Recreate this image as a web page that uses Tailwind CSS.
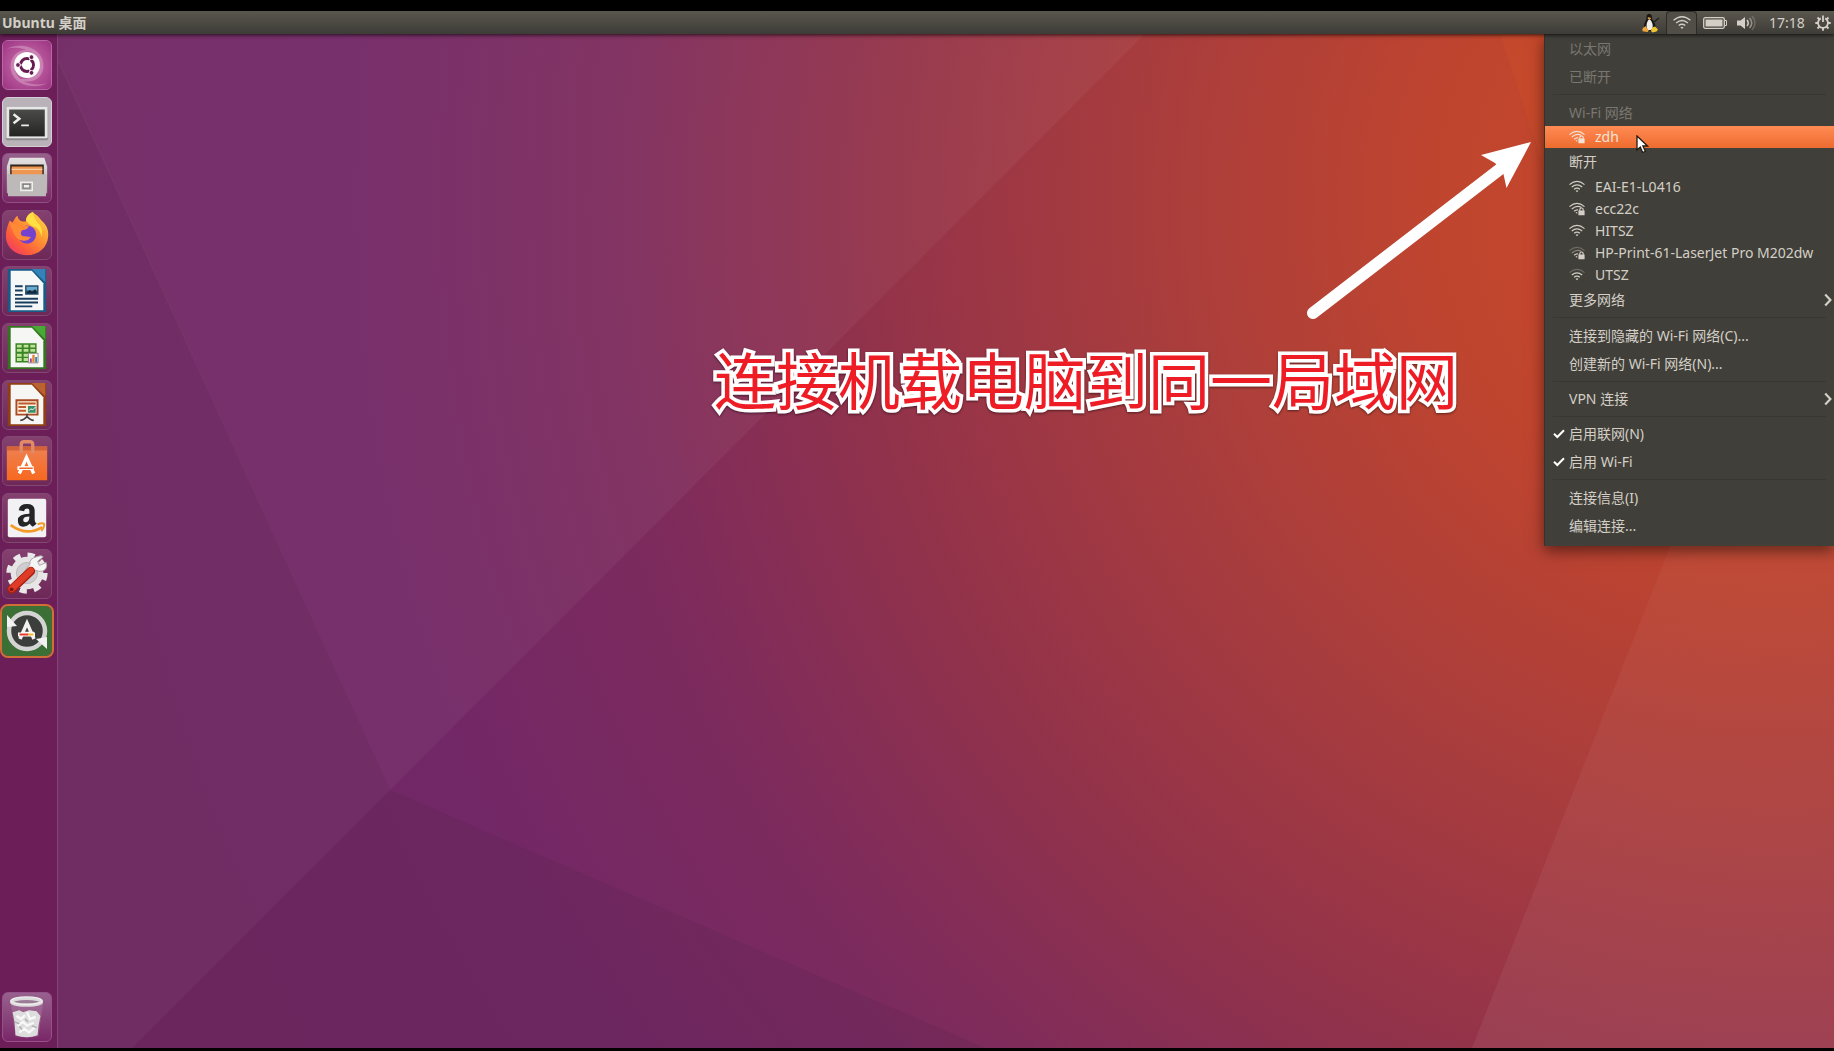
<!DOCTYPE html>
<html lang="zh-CN">
<head>
<meta charset="utf-8">
<title>Ubuntu 桌面</title>
<script src="https://cdn.jsdelivr.net/npm/@tailwindcss/browser@4"></script>
</head>
<body class="flex h-screen flex-col overflow-hidden bg-black pt-[11px] pb-[3px] font-['Noto_Sans','Noto_Sans_CJK_SC',sans-serif] text-sm text-[#d3cfc7]">

<!-- Shared symbols and gradients -->
<svg class="absolute size-0" aria-hidden="true">
  <defs>
    <symbol id="wifi" viewBox="0 0 16 14">
      <g fill="none" stroke="currentColor" stroke-width="1.200">
        <path d="M0.5 4.600Q8-1.800 15.500 4.600"/>
        <path d="M2.800 7Q8 2.600 13.200 7"/>
        <path d="M5.100 9.300Q8 7 10.900 9.300"/>
      </g>
      <path d="M6.600 10.800Q8 9.800 9.400 10.800L8 12.300z" fill="currentColor"/>
    </symbol>
    <symbol id="wifi-low" viewBox="0 0 16 14">
      <g fill="none" stroke="currentColor" stroke-width="1.200">
        <path d="M0.5 4.600Q8-1.800 15.500 4.600" opacity=".3"/>
        <path d="M2.800 7Q8 2.600 13.200 7"/>
        <path d="M5.100 9.300Q8 7 10.900 9.300"/>
      </g>
      <path d="M6.600 10.800Q8 9.800 9.400 10.800L8 12.300z" fill="currentColor"/>
    </symbol>
    <symbol id="wifi-lock" viewBox="0 0 16 14">
      <g fill="none" stroke="currentColor" stroke-width="1.200">
        <path d="M0.5 4.600Q8-1.800 15.500 4.600"/>
        <path d="M2.800 7Q8 2.600 12.500 5.600"/>
        <path d="M5.100 9.300Q7 7.600 9 7.900"/>
      </g>
      <path d="M6.400 10.800L8.200 9.800v2z" fill="currentColor"/>
      <path d="M9.400 8.500h.8V7.700a2.300 2.300 0 0 1 4.600 0v.8h.8V13.200h-6.200zM11.400 8.500h2.200V7.700a1.100 1.100 0 0 0-2.200 0z" fill="currentColor" fill-rule="evenodd"/>
    </symbol>
    <symbol id="wifi-lock-low" viewBox="0 0 16 14">
      <g fill="none" stroke="currentColor" stroke-width="1.200">
        <path d="M0.5 4.600Q8-1.800 15.500 4.600" opacity=".3"/>
        <path d="M2.800 7Q8 2.600 12.500 5.600" opacity=".5"/>
        <path d="M5.100 9.300Q7 7.600 9 7.900"/>
      </g>
      <path d="M6.400 10.800L8.200 9.800v2z" fill="currentColor"/>
      <path d="M9.400 8.500h.8V7.700a2.300 2.300 0 0 1 4.600 0v.8h.8V13.200h-6.200zM11.400 8.500h2.200V7.700a1.100 1.100 0 0 0-2.200 0z" fill="currentColor" fill-rule="evenodd"/>
    </symbol>
    <symbol id="chevron" viewBox="0 0 8 14"><path d="M1.2 1.500L6.400 7L1.200 12.500" fill="none" stroke="currentColor" stroke-width="2.200"/></symbol>
    <symbol id="check" viewBox="0 0 12 10"><path d="M1 4.800L4.300 8L11 1.200" fill="none" stroke="currentColor" stroke-width="2"/></symbol>
    <linearGradient id="metal" x1="0" y1="0" x2="0" y2="1"><stop offset="0" stop-color="#e4e2e2"/><stop offset="1" stop-color="#aaa7a9"/></linearGradient>
    <linearGradient id="screen" x1="0" y1="0" x2="0" y2="1"><stop offset="0" stop-color="#4b4b49"/><stop offset="1" stop-color="#242423"/></linearGradient>
    <linearGradient id="fox" x1="1" y1="0" x2="0.1" y2="1"><stop offset="0" stop-color="#ffe44a"/><stop offset=".4" stop-color="#ff9a32"/><stop offset=".75" stop-color="#fb5a3d"/><stop offset="1" stop-color="#ee3572"/></linearGradient>
    <linearGradient id="bag" x1="0" y1="0" x2="0" y2="1"><stop offset="0" stop-color="#ee8153"/><stop offset="1" stop-color="#f7691f"/></linearGradient>
    <radialGradient id="swirl" cx=".5" cy=".5" r=".7"><stop offset="0" stop-color="#cf76ad"/><stop offset="1" stop-color="#9c3384"/></radialGradient>
  </defs>
</svg>

<header class="relative z-20 flex h-[23px] shrink-0 items-center bg-gradient-to-b from-[#5a574e] to-[#3e3c37] pl-[2px] shadow-[0_1px_4px_rgba(0,0,0,0.75)]">
  <h1 class="flex-1 text-sm leading-5 font-bold">Ubuntu 桌面</h1>
  <div class="flex h-full items-center">
    <button aria-label="输入法" class="mr-1 flex w-[22px] justify-center">
      <svg class="h-5 w-5" viewBox="0 0 20 20">
        <path d="M8 1C5.500 1 5.400 3.500 5.600 5.500C4.500 8 2.600 11 3 14.500L6 18h5l3.500-4C14.500 10 12 8 11 5.500C11.200 3 10.500 1 8 1z" fill="#191816"/>
        <path d="M7.800 6.500C5.500 9 4.500 14 7 17h3.200C13 14 11.500 9 9 6.500z" fill="#efeeea"/>
        <path d="M7 4.300l2 .2 1.300.9-2 1.200-1.700-1z" fill="#e9a13b"/>
        <path d="M1.500 15.500L4.500 13l3.300 4.500-1.300 1.500-5-.8z" fill="#f0a73c"/>
        <path d="M10 18l1-3.500 3-1 3 3-1.500 2-4 1z" fill="#f1c431"/>
        <path d="M13 9l5-4" stroke="#23211d" stroke-width="1.600"/>
      </svg>
    </button>
    <button aria-label="网络" class="flex h-[23px] w-[31px] items-center justify-center rounded-t-sm border border-b-0 border-[#2d2b27] bg-[#504e47]">
      <svg class="h-4 w-[18px]"><use href="#wifi"/></svg>
    </button>
    <button aria-label="电池" class="ml-1.5 flex w-6">
      <svg class="h-3 w-6" viewBox="0 0 24 12"><rect x=".7" y=".7" width="20.600" height="10.600" rx="1.500" fill="none" stroke="currentColor" stroke-width="1.300"/><path d="M2.500 2.500h17v7h-17z" fill="currentColor"/><path d="M22 3.500h1.500v5H22" fill="none" stroke="currentColor"/></svg>
    </button>
    <button aria-label="音量" class="ml-2.5 flex w-5">
      <svg class="h-4 w-5" viewBox="0 0 20 16"><path d="M0 5.500h3.500L8 2v12l-4.500-3.500H0z" fill="currentColor"/><g fill="none" stroke="currentColor" stroke-width="1.500"><path d="M10 5q2.500 3 0 6"/><path d="M12.500 3q4.500 5 0 10" opacity=".55"/><path d="M15 1q6 7 0 14" opacity=".25"/></g></svg>
    </button>
    <time class="ml-3 w-9 text-sm leading-5">17:18</time>
    <button aria-label="系统" class="mr-[3px] ml-2.5 flex w-4">
      <svg class="size-4" viewBox="0 0 16 16" fill="none" stroke="currentColor"><path d="M5.800 3.400A5 5 0 1 0 10.200 3.400" stroke-width="1.800"/><path d="M8 .5v6.500" stroke-width="1.800"/><path d="M.3 8h2.700M13 8h2.700M2.500 2.500l2 2M13.500 2.500l-2 2M2.500 13.500l2-2M13.500 13.500l-2-2M8 13v2.700" stroke-width="1.900"/></svg>
    </button>
  </div>
</header>

<main class="relative isolate flex min-h-0 flex-1">
  <!-- Wallpaper -->
  <svg class="absolute inset-0 -z-10 size-full" viewBox="0 34 1834 1014" preserveAspectRatio="none" aria-hidden="true">
    <defs>
      <radialGradient id="glow" gradientUnits="userSpaceOnUse" cx="1780" cy="200" r="1750">
        <stop offset="0" stop-color="#c84a29"/><stop offset=".19" stop-color="#c0452e"/><stop offset=".36" stop-color="#a93d3d"/>
        <stop offset=".51" stop-color="#943349"/><stop offset=".67" stop-color="#7d2b5d"/><stop offset=".82" stop-color="#722766"/><stop offset="1" stop-color="#702763"/>
      </radialGradient>
      <linearGradient id="edge" gradientUnits="userSpaceOnUse" x1="0" y1="500" x2="0" y2="1048"><stop offset="0" stop-color="#fff" stop-opacity=".03"/><stop offset="1" stop-color="#fff" stop-opacity=".06"/></linearGradient>
    </defs>
    <path d="M0 34h1834v1014H0z" fill="url(#glow)"/>
    <path d="M57 34H1145L390 790L57 60z" fill="#fff" opacity=".045"/>
    <path d="M57 55L390 790L132 1048H57z" fill="#7c6a6a" opacity=".09"/>
    <path d="M390 790L985 1048H132z" fill="#5a264f" opacity=".24"/>
    <path d="M1500 34h334v514H1670z" fill="#ea6a1d" opacity=".1"/>
    <path d="M1834 170L1670 547L1472 1048h362z" fill="url(#edge)"/>
  </svg>

  <nav aria-label="启动器" class="flex w-[58px] shrink-0 flex-col justify-between border-r border-[#854378] bg-[#6b1e58] py-1.5 pl-[2px]">
    <div class="flex h-[616px] flex-col justify-between">
      <button aria-label="搜索" class="size-[50px] overflow-hidden rounded-md border border-[#b868a5] bg-[#a4408b]">
        <svg class="size-full" viewBox="0 0 50 50"><path d="M0 0h50v50H0z" fill="url(#swirl)"/><path d="M4 8C20 0 44 8 42 28C40 44 20 46 10 36C16 42 34 42 37 26C38 12 20 4 4 8zM46 44C30 52 6 44 8 24C10 10 24 6 34 12C22 8 12 14 12 26C12 42 30 48 46 44z" fill="#fff" opacity=".25"/><circle cx="25" cy="25" r="13.500" fill="#fff"/><circle cx="25" cy="25" r="6.800" fill="none" stroke="#681d52" stroke-width="3"/><path d="M25 25H13M25 25l6-10.400M25 25l6 10.400" stroke="#fff" stroke-width="1.200"/><g fill="#681d52" stroke="#fff"><circle cx="15.600" cy="25" r="2.500"/><circle cx="29.700" cy="16.800" r="2.500"/><circle cx="29.700" cy="33.200" r="2.500"/></g></svg>
      </button>
      <button aria-label="终端" class="size-[50px] overflow-hidden rounded-md border border-[#d4cfd3] bg-[#b9b2b9]">
        <svg class="size-full" viewBox="0 0 50 50"><rect x="3" y="9" width="44" height="35" rx="1.500" fill="#8c8a8b"/><rect x="3.500" y="9" width="43" height="33" rx="1" fill="#e8e7e7"/><rect x="6.500" y="12" width="37" height="28" fill="url(#screen)"/><path d="M11 17l6 4.700-6 4.700" fill="none" stroke="#eee" stroke-width="2.600"/><path d="M19 28.500h8" stroke="#eee" stroke-width="2"/></svg>
      </button>
      <button aria-label="文件" class="size-[50px] overflow-hidden rounded-md border border-[#8f5183] bg-gradient-to-b from-[#95608a] to-[#792864]">
        <svg class="size-full" viewBox="0 0 50 50"><path d="M7 4h36l3 9v28H4V13z" fill="url(#metal)"/><path d="M7.500 11h35v11h-35z" fill="#30241c"/><path d="M9 13h32v9H9z" fill="#ee9552"/><path d="M9 16h32" stroke="#f4d0a6" stroke-width="1.500"/><path d="M4.500 21h41l-.8 23h-39.400z" fill="#bdb9b9"/><rect x="18.500" y="29.500" width="12" height="8.500" fill="#b2adad" stroke="#f0eeee" stroke-width="1.500"/><rect x="21" y="31.500" width="7" height="4" fill="#eee" stroke="#706c6c"/></svg>
      </button>
      <button aria-label="Firefox" class="size-[50px] overflow-hidden rounded-md border border-[#824873] bg-gradient-to-b from-[#84406f] to-[#6d2858]">
        <svg class="size-full" viewBox="0 0 50 50"><path d="M31 1C34 4 37 5 40 10C45 14 48 20 47 27C46 38 37 46 25 46C12 46 3 37 3 26C3 20 5 15 7 10L10 12Q13 6 15 5Q16 10 20 11L24 11Q23 5 31 1z" fill="url(#fox)"/><circle cx="25" cy="24.500" r="9.500" fill="#7542cf"/><path d="M7 12L15 14L27 16Q25 20 20 20Q17 23 20 26L29 27Q25 33 17 30C12 27 10 21 7 12z" fill="#ff8a36"/><path d="M24 10Q24 4 31 1Q32 8 38 14Q42 19 40 27Q39 20 34 17Q28 16 24 10z" fill="#ffdf42"/></svg>
      </button>
      <button aria-label="Writer" class="size-[50px] overflow-hidden rounded-md border border-[#824873] bg-gradient-to-b from-[#84406f] to-[#6d2858]">
        <svg class="size-full" viewBox="0 0 50 50"><path d="M5 2h40v45H5z" fill="#175b86"/><path d="M8 4h22l12 13v28H8z" fill="#f6f7f7"/><path d="M30 2h14v14z" fill="#3483b8"/><path d="M12.500 20h8M12.500 24.500h8M12.500 29h8M12.500 33h24M12.500 37h24M12.500 41h18" stroke="#183f5f" stroke-width="2"/><path d="M23 19h14v10H23z" fill="#264e6b"/><path d="M24.500 20.500h11v4h-11z" fill="#68abcf"/><path d="M24.500 27l3-3 3 2 3-3 2 4.500h-11z" fill="#13293b"/></svg>
      </button>
      <button aria-label="Calc" class="size-[50px] overflow-hidden rounded-md border border-[#824873] bg-gradient-to-b from-[#84406f] to-[#6d2858]">
        <svg class="size-full" viewBox="0 0 50 50"><path d="M5 2h40v45H5z" fill="#33751f"/><path d="M8 4h22l12 13v28H8z" fill="#f6f7f4"/><path d="M30 2h14v14z" fill="#49a936"/><path d="M13 20h22v20H13z" fill="#398425"/><path d="M14.500 21.500h5v3h-5zM21.500 21.500h5v3h-5zM28.500 21.500h5v3h-5zM14.500 26h5v3h-5zM21.500 26h5v3h-5zM28.500 26h5v3h-5zM14.500 31h5v3h-5zM21.500 31h5v3h-5zM14.500 35.500h5v3h-5zM21.500 35.500h5v3h-5z" fill="#bde298"/><path d="M26.500 30.500h10v10h-10z" fill="#fff" stroke="#8b8b83"/><path d="M28 36h2v4h-2z" fill="#a53b94"/><path d="M30.500 32h2.500v8h-2.500z" fill="#e5852d"/><path d="M33.500 34.500h2v5.500h-2z" fill="#3a81bc"/></svg>
      </button>
      <button aria-label="Impress" class="size-[50px] overflow-hidden rounded-md border border-[#824873] bg-gradient-to-b from-[#84406f] to-[#6d2858]">
        <svg class="size-full" viewBox="0 0 50 50"><path d="M5 2h40v45H5z" fill="#903f15"/><path d="M8 4h22l12 13v28H8z" fill="#f6f6f4"/><path d="M30 2h14v14z" fill="#bb6231"/><path d="M14 20h22v15H14z" fill="#fff1df" stroke="#a84a24" stroke-width="2"/><path d="M16 23.500h18M16 27h8M16 31h8" stroke="#bc5b2c" stroke-width="2"/><path d="M26 26h8v7h-8z" fill="#378f69"/><path d="M27 31l2-2 2 1 3-3" stroke="#fff" fill="none"/><path d="M18 41q3 0 7-4q4 4 7 4M25 34v4" stroke="#4b4140" stroke-width="1.800" fill="none"/></svg>
      </button>
      <button aria-label="Ubuntu 软件" class="size-[50px] overflow-hidden rounded-md border border-[#824873] bg-gradient-to-b from-[#84406f] to-[#6d2858]">
        <svg class="size-full" viewBox="0 0 50 50"><path d="M4 10h42v35H4z" fill="url(#bag)"/><path d="M4 10h42v4H4z" fill="#d46238"/><path d="M19 17V8q0-3 3-3h6q3 0 3 3v9" fill="none" stroke="#e08a68" stroke-width="3.500"/><path d="M17 38l7.500-16.500L32 38M18 32.500h13" fill="none" stroke="#fff" stroke-width="3.500"/><path d="M15 32.500h17" stroke="#fff" stroke-width="4"/><path d="M17 32.500h14" stroke="#ee6a2c" stroke-width="1.500"/></svg>
      </button>
      <button aria-label="Amazon" class="size-[50px] overflow-hidden rounded-md border border-[#824873] bg-gradient-to-b from-[#84406f] to-[#6d2858]">
        <svg class="size-full" viewBox="0 0 50 50"><rect x="5" y="5" width="40" height="40" rx="2" fill="#f2f1f3"/><path d="M16.500 17Q17 10.500 25 10.500Q33 10.500 33 17.500V27Q33 29 35 31L31 34Q28.500 32.500 28 31Q25 34 21 34Q15.500 34 15.500 27.500Q15.500 20.500 27.500 20.500V17.500Q27.500 15 25 15Q22.500 15 22 18zM27.500 23.500Q21 23.500 21 27Q21 29.500 23.500 29.500Q27.500 29.500 27.500 23.500z" fill="#252426" fill-rule="evenodd"/><path d="M8 32.500q17 12 33 2" fill="none" stroke="#f39a27" stroke-width="2.800"/><path d="M36 31.500q6-2 7 0q0 4-3 7" fill="none" stroke="#f39a27" stroke-width="2"/></svg>
      </button>
      <button aria-label="系统设置" class="size-[50px] overflow-hidden rounded-md border border-[#824873] bg-gradient-to-b from-[#84406f] to-[#6d2858]">
        <svg class="size-full" viewBox="0 0 50 50"><circle cx="25" cy="24" r="18.500" fill="none" stroke="#e9e7e8" stroke-width="6" stroke-dasharray="7.265 7.265"/><circle cx="25" cy="24" r="17" fill="#e6e4e5"/><circle cx="25" cy="24" r="11" fill="#d0cdd0" stroke="#bab6ba"/><path d="M35 7q5-2 7 0l-6 5 2 4 7-3q2 7-4 9-4 1-7-1l-6 5-5-5 5-6q-1-6 7-8z" fill="#f6f5f5" stroke="#a7a2a5"/><path d="M29 22L9 41" stroke="#a81e12" stroke-width="9" stroke-linecap="round"/><path d="M29 21.500L9 40.500" stroke="#df3c27" stroke-width="6.500" stroke-linecap="round"/><circle cx="9" cy="41" r="2" fill="#7c1510"/></svg>
      </button>
      <button aria-label="软件更新器" class="size-[50px] overflow-hidden rounded-md bg-[#3c6f36] outline-2 outline-[#cf6e37]">
        <svg class="size-full" viewBox="0 0 50 50"><circle cx="25" cy="25" r="18.500" fill="#3c3e3c"/><circle cx="25" cy="25" r="18" fill="none" stroke="#d4d4d3" stroke-width="4.500"/><path d="M5 9v12l10-1zM45 43V31l-11 2z" fill="#f2f2f2"/><path d="M18 33l7-16 7 16M19 27.500h13" fill="none" stroke="#f3f2f1" stroke-width="3.500"/><path d="M16 28.500h17" stroke="#fff" stroke-width="4"/><path d="M17.500 28.500h9" stroke="#e33b2d" stroke-width="1.800"/><path d="M26.500 28.500h5" stroke="#f6b629" stroke-width="1.800"/></svg>
      </button>
    </div>
    <button aria-label="回收站" class="size-[50px] overflow-hidden rounded-md border border-[#96508a] bg-gradient-to-b from-[#97618d] to-[#7a2668]">
      <svg class="size-full" viewBox="0 0 50 50"><path d="M8 9h34l-5 36q-12 3-24 0z" fill="#c6a4c0" opacity=".25"/><path d="M10 20l7-2 4 2 6-2 8 1 4 5-2 10-1 10q-11 4-23 0l-1-14z" fill="#dedddd"/><path d="M14 24l5 3 4-4M25 20l3 7 6-2M15 34l6-4 4 4 7-3M17 41l5-4 5 4 6-5" fill="none" stroke="#f8f8f8" stroke-width="2.500"/><path d="M12 30l5 2M23 27l3 3M30 34l5 2M20 38l-3-3" stroke="#b1aeb0" stroke-width="1.500"/><ellipse cx="24.500" cy="9" rx="15.500" ry="3.500" fill="#9b7c96" stroke="#dddadb" stroke-width="3.500"/><ellipse cx="24.500" cy="8" rx="16" ry="4" fill="none" stroke="#fff" opacity=".7"/></svg>
    </button>
  </nav>

  <section aria-label="桌面" class="relative min-w-0 flex-1">
    <p class="absolute top-[301px] right-[376px] text-[62px] leading-[92px] font-normal whitespace-nowrap text-[#ee1c25] [paint-order:stroke] [-webkit-text-stroke:7px_white] [stroke-linejoin:round] drop-shadow-[0_1px_1px_rgba(0,0,0,0.5)]">连接机载电脑到同一局域网</p>

    <svg class="absolute top-[96px] right-[284px] h-[200px] w-[260px]" viewBox="0 0 260 200" fill="#fff" aria-hidden="true">
      <path d="M23 183L214 36" stroke="#fff" stroke-width="12" stroke-linecap="round"/>
      <path d="M241 12L191 25L205 33L213 42L216.500 58z"/>
    </svg>

    <div role="menu" class="absolute top-0 right-0 w-[290px] border-l border-[#35332d] bg-[#413f39] pt-px pb-1.5 shadow-[0_5px_14px_rgba(0,0,0,0.5)]">
      <div class="flex h-7 items-center pl-6 text-[#7a7771]">以太网</div>
      <div class="flex h-7 items-center pl-6 text-[#7a7771]">已断开</div>
      <hr class="mx-2 mt-[3px] mb-1 border-t border-[#39372f]">
      <div class="flex h-[27px] items-center pl-6 text-[#7a7771]">Wi-Fi 网络</div>
      <button role="menuitem" class="flex h-[22px] w-full items-center gap-2.5 bg-gradient-to-b from-[#ff8b53] to-[#ee6b2e] pl-6 text-[#f3e3d6]"><svg class="h-3.5 w-4"><use href="#wifi-lock"/></svg>zdh</button>
      <button role="menuitem" class="flex h-7 w-full items-center pl-6">断开</button>
      <button role="menuitem" class="flex h-[22px] w-full items-center gap-2.5 pl-6"><svg class="h-3.5 w-4"><use href="#wifi"/></svg>EAI-E1-L0416</button>
      <button role="menuitem" class="flex h-[22px] w-full items-center gap-2.5 pl-6"><svg class="h-3.5 w-4"><use href="#wifi-lock"/></svg>ecc22c</button>
      <button role="menuitem" class="flex h-[22px] w-full items-center gap-2.5 pl-6"><svg class="h-3.5 w-4"><use href="#wifi"/></svg>HITSZ</button>
      <button role="menuitem" class="flex h-[22px] w-full items-center gap-2.5 pl-6 whitespace-nowrap"><svg class="h-3.5 w-4 shrink-0"><use href="#wifi-lock-low"/></svg>HP-Print-61-LaserJet Pro M202dw</button>
      <button role="menuitem" class="flex h-[22px] w-full items-center gap-2.5 pl-6"><svg class="h-3.5 w-4"><use href="#wifi-low"/></svg>UTSZ</button>
      <button role="menuitem" class="flex h-7 w-full items-center justify-between pr-[2px] pl-6">更多网络<svg class="h-3.5 w-2"><use href="#chevron"/></svg></button>
      <hr class="mx-2 mt-[3px] mb-1 border-t border-[#39372f]">
      <button role="menuitem" class="flex h-7 w-full items-center pl-6"><span>连接到隐藏的 Wi-Fi 网络(C)...</span></button>
      <button role="menuitem" class="flex h-7 w-full items-center pl-6"><span>创建新的 Wi-Fi 网络(N)...</span></button>
      <hr class="mx-2 my-[3px] border-t border-[#39372f]">
      <button role="menuitem" class="flex h-7 w-full items-center justify-between pr-[2px] pl-6">VPN 连接<svg class="h-3.5 w-2"><use href="#chevron"/></svg></button>
      <hr class="mx-2 my-[3px] border-t border-[#39372f]">
      <label class="relative flex h-7 items-center gap-1 pl-2"><input type="checkbox" checked class="peer sr-only"><svg class="invisible h-2.5 w-3 text-white peer-checked:visible"><use href="#check"/></svg>启用联网(N)</label>
      <label class="relative flex h-7 items-center gap-1 pl-2"><input type="checkbox" checked class="peer sr-only"><svg class="invisible h-2.5 w-3 text-white peer-checked:visible"><use href="#check"/></svg>启用 Wi-Fi</label>
      <hr class="mx-2 mt-[3px] mb-1 border-t border-[#39372f]">
      <button role="menuitem" class="flex h-7 w-full items-center pl-6">连接信息(I)</button>
      <button role="menuitem" class="flex h-7 w-full items-center pl-6">编辑连接...</button>
    </div>

    <!-- Mouse pointer -->
    <svg class="absolute top-[101px] right-[185px] h-[19px] w-[13px]" viewBox="0 0 13 19" aria-hidden="true"><path d="M1 1v14l3.300-3 2.400 5.500 2.600-1.200-2.400-5.300H11.500z" fill="#fff" stroke="#241910" stroke-width="1.300"/></svg>
  </section>
</main>
</body>
</html>
